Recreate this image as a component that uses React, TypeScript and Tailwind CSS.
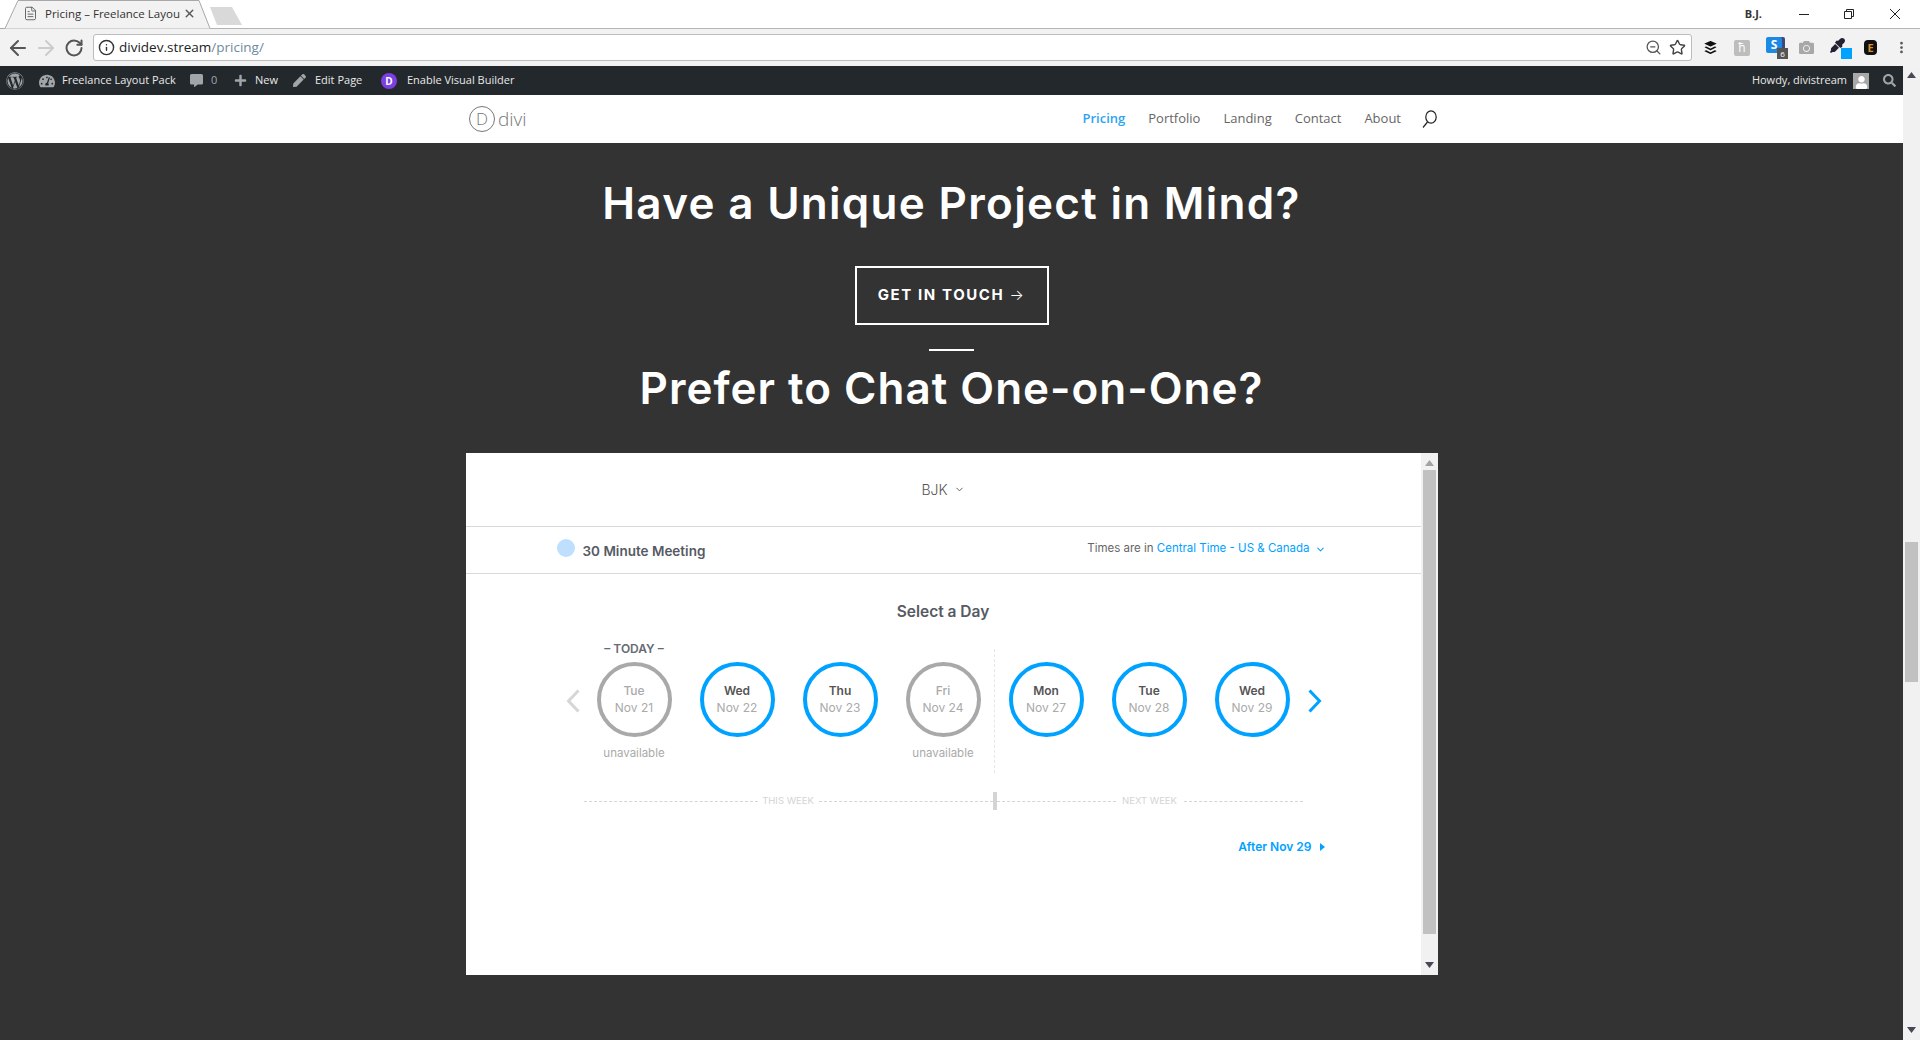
import { ArrowLeft, ArrowRight, ChevronDown, FileText, Info, MoreVertical, RotateCw, Star, X, ZoomOut } from 'lucide-react';
import { FaBuffer, FaCamera, FaCommentAlt, FaEyeDropper, FaPen, FaPlus, FaSearch, FaTachometerAlt, FaUser, FaWordpress } from 'react-icons/fa';

const openSans = 'font-["Open_Sans",sans-serif]';
const calFont = 'font-["Inter",sans-serif]';

const days = [
  { name: 'Tue', date: 'Nov 21', off: true, today: true },
  { name: 'Wed', date: 'Nov 22' },
  { name: 'Thu', date: 'Nov 23' },
  { name: 'Fri', date: 'Nov 24', off: true },
  { name: 'Mon', date: 'Nov 27' },
  { name: 'Tue', date: 'Nov 28' },
  { name: 'Wed', date: 'Nov 29' },
];

function ScrollArrow({ down, color = '#4a4658' }: { down?: boolean; color?: string }) {
  return (
    <svg width="9" height="6" viewBox="0 0 9 6" className="shrink-0">
      <path d={down ? 'M0 0h9L4.5 6z' : 'M0 6h9L4.5 0z'} fill={color} />
    </svg>
  );
}

function Chrome() {
  return (
    <>
      <div className="h-[29px] bg-white border-b border-[#b4b4b4] flex items-start justify-between relative">
        <div className="relative w-[211px] h-[29px] flex items-center pl-[23px] pb-[2px]">
          <svg className="absolute left-0 top-0" width="211" height="29" viewBox="0 0 211 29">
            <path d="M0 28.5h5L18 .5h181l11 28" fill="#f2f2f2" stroke="#a8a8a8" />
          </svg>
          <FileText className="relative text-[#555] w-[15px] h-[15px]" strokeWidth={1.4} />
          <span className={`relative ml-[7px] w-[133px] whitespace-nowrap text-[11.5px] text-[#333] ${openSans}`}>Pricing – Freelance Layou</span>
          <X className="relative ml-[5px] text-[#555] w-[13px] h-[13px]" strokeWidth={2.6} />
          <svg className="absolute left-[209px] top-[7px]" width="34" height="18" viewBox="0 0 34 18">
            <path d="M1 0h22l10 18H8z" fill="#d9d9d9" />
          </svg>
        </div>
        <div className="flex items-center h-[28px] pr-[20px]">
          <span className={`text-[11px] font-bold text-[#333] mr-[37px] ${openSans}`}>B.J.</span>
          <div className="w-[10px] h-px bg-[#222] mr-[35px]" />
          <svg className="mr-[36px]" width="10" height="10" viewBox="0 0 10 10" fill="none" stroke="#222">
            <path d="M.5 2.5h7v7h-7zM2.5 2.5v-2h7v7h-2" />
          </svg>
          <svg width="10" height="10" viewBox="0 0 10 10" stroke="#222">
            <path d="M0 0l10 10M10 0L0 10" />
          </svg>
        </div>
      </div>
      <div className="h-[37px] bg-[#f2f2f2] flex items-center pl-[6px]">
        <ArrowLeft className="w-[24px] h-[24px] text-[#555]" strokeWidth={2} />
        <ArrowRight className="ml-[4px] w-[24px] h-[24px] text-[#ccc]" strokeWidth={2} />
        <RotateCw className="ml-[6px] w-[20px] h-[20px] text-[#555]" strokeWidth={2.4} />
        <div className="ml-[9px] w-[1599px] h-[27px] bg-white border border-[#bcbcbc] rounded-[3px] flex items-center pl-[4px] pr-[5px]">
          <Info className="w-[17px] h-[17px] text-[#333]" strokeWidth={2} />
          <span className={`ml-[4px] text-[13.5px] text-[#222] ${openSans}`}>dividev.stream<span className="text-[#6e8aa0]">/pricing/</span></span>
          <ZoomOut className="ml-auto mr-[1px] w-[17px] h-[17px] text-[#555]" strokeWidth={1.8} />
          <Star className="ml-[6px] w-[17px] h-[17px] text-[#444]" strokeWidth={2} />
        </div>
        <FaBuffer className="ml-[11px] w-[15px] h-[15px] text-[#111]" />
        <div className={`ml-[16px] w-[16px] h-[16px] rounded-[2px] bg-[#bdbdbd] text-white text-[12px] leading-[16px] text-center ${openSans}`}>ħ</div>
        <div className="relative ml-[16px] w-[22px] h-[22px]">
          <div className="absolute left-[3px] top-0 w-[16px] h-[16px] rounded-[2px] bg-[#3b4a7a]" />
          <div className={`relative w-[16px] h-[16px] rounded-[2px] bg-[#1e88e5] text-white text-[12px] leading-[16px] font-bold text-center ${openSans}`}>S</div>
          <div className={`absolute right-0 bottom-0 w-[11px] h-[11px] bg-[#555] text-white text-[8px] leading-[11px] text-center ${openSans}`}>6</div>
        </div>
        <FaCamera className="ml-[11px] w-[15px] h-[15px] text-[#a8a8a8]" />
        <div className="relative ml-[16px] w-[22px] h-[22px]">
          <FaEyeDropper className="w-[15px] h-[15px] mt-[1px] text-[#223]" />
          <div className="absolute right-0 bottom-0 w-[11px] h-[11px] bg-[#00a2ff]" />
        </div>
        <div className={`ml-[12px] w-[13px] h-[15px] rounded-[4px] bg-[#111] text-[#d9902a] text-[11px] leading-[15px] font-bold text-center ${openSans}`}>E</div>
        <MoreVertical className="ml-[17px] w-[15px] h-[15px] text-[#555]" strokeWidth={2.4} />
      </div>
    </>
  );
}

function AdminBar() {
  return (
    <div className={`h-[29px] bg-[#23282d] flex items-center text-[#e8e8e8] text-[11px] ${openSans}`}>
      <FaWordpress className="ml-[6px] w-[18px] h-[18px] text-[#a0a5aa]" />
      <FaTachometerAlt className="ml-[15px] w-[16px] h-[16px] text-[#a0a5aa]" />
      <span className="ml-[7px] w-[128px] whitespace-nowrap">Freelance Layout Pack</span>
      <FaCommentAlt className="w-[13px] h-[13px] text-[#a0a5aa]" />
      <span className="ml-[8px] w-[7px] text-[#a0a5aa]">0</span>
      <FaPlus className="ml-[16px] w-[13px] h-[13px] text-[#a0a5aa]" />
      <span className="ml-[8px] w-[23px]">New</span>
      <FaPen className="ml-[15px] w-[13px] h-[13px] text-[#a0a5aa]" />
      <span className="ml-[9px] w-[48px] whitespace-nowrap">Edit Page</span>
      <div className="ml-[18px] w-[16px] h-[16px] rounded-full bg-[#7c3fe4] text-white text-[10px] leading-[16px] font-bold text-center">D</div>
      <span className="ml-[10px]">Enable Visual Builder</span>
      <span className="ml-auto">Howdy, divistream</span>
      <div className="ml-[6px] w-[16px] h-[16px] bg-[#a8a8a8] flex items-end justify-center overflow-hidden">
        <FaUser className="w-[13px] h-[13px] text-white" />
      </div>
      <FaSearch className="ml-[14px] mr-[7px] w-[13px] h-[13px] text-[#a0a5aa]" />
    </div>
  );
}

function Nav() {
  const links = ['Portfolio', 'Landing', 'Contact', 'About'];
  return (
    <div className={`h-[48px] bg-white flex items-center justify-between pl-[469px] pr-[466px] ${openSans}`}>
      <div className="flex items-center">
        <div className="w-[26px] h-[26px] rounded-full border border-[#777] text-[#777] text-[17px] leading-[24px] font-light text-center">D</div>
        <span className="ml-[3px] text-[19px] font-light leading-none text-[#777]">divi</span>
      </div>
      <div className="flex items-center text-[13px] text-[#666]">
        <span className="text-[#2ea3f2] font-semibold">Pricing</span>
        {links.map((l) => (
          <span key={l} className="ml-[23px]">{l}</span>
        ))}
        <svg className="ml-[20px]" width="16" height="18" viewBox="0 0 16 18" fill="none" stroke="#222" strokeWidth="1.2">
          <ellipse cx="10" cy="7" rx="5.2" ry="6.2" />
          <path d="M6.5 12L2 17.5" />
        </svg>
      </div>
    </div>
  );
}

function Day({ name, date, off, today }: { name: string; date: string; off?: boolean; today?: boolean }) {
  return (
    <div className="w-[75px] flex flex-col items-center shrink-0">
      <div className="h-[20px] text-[12px] leading-[14px] font-semibold text-[#666a73] whitespace-nowrap">{today ? '– TODAY –' : ''}</div>
      <div className={`w-[75px] h-[75px] rounded-full border-[4px] flex flex-col items-center ${off ? 'border-[#a9a9a9]' : 'border-[#00a2ff]'}`}>
        <span className={`mt-[17px] text-[12px] leading-[16px] ${off ? 'text-[#aaa] font-medium' : 'text-[#555] font-semibold'}`}>{name}</span>
        <span className="mt-[1px] text-[12px] leading-[16px] text-[#aaa]">{date}</span>
      </div>
      {off && <div className="mt-[9px] text-[11.5px] leading-[14px] text-[#aaa]">unavailable</div>}
    </div>
  );
}

function Calendar() {
  return (
    <div className={`mt-[40px] mx-auto w-[972px] h-[522px] bg-white flex ${calFont}`}>
      <div className="w-[955px] flex flex-col">
        <div className="h-[74px] border-b border-[#d9d9d9] flex items-center justify-center text-[14px] font-light text-[#555]">
          BJK
          <ChevronDown className="ml-[6px] w-[11px] h-[11px]" strokeWidth={2} />
        </div>
        <div className="h-[47px] border-b border-[#d9d9d9] flex justify-between pl-[91px] pr-[95px]">
          <div className="flex items-start">
            <div className="mt-[12px] w-[18px] h-[18px] rounded-full bg-[#bfdfff]" />
            <span className="ml-[8px] mt-[14px] text-[13.5px] leading-[20px] font-semibold text-[#555a63]">30 Minute Meeting</span>
          </div>
          <div className="flex items-center h-[44px] text-[11.5px] text-[#666] whitespace-nowrap">
            Times are in&nbsp;<span className="text-[#00a2ff]">Central Time - US &amp; Canada</span>
            <ChevronDown className="ml-[5px] w-[11px] h-[11px] text-[#00a2ff]" strokeWidth={2.2} />
          </div>
        </div>
        <div className="mt-[28px] text-center text-[15.5px] leading-[20px] font-semibold text-[#555a63]">Select a Day</div>
        <div className="mt-[20px] ml-[100px] flex items-start">
          <svg className="mt-[47px] shrink-0" width="14" height="24" viewBox="0 0 14 24" fill="none" stroke="#d6d6d6" strokeWidth="3">
            <path d="M12.5 1.5L2.5 12l10 10.5" />
          </svg>
          <div className="ml-[17px] flex gap-[28px]">
            {days.slice(0, 4).map((d) => (
              <Day key={d.date} {...d} />
            ))}
          </div>
          <div className="mt-[7px] ml-[13px] mr-[14px] h-[124px] border-l border-dashed border-[#e6e6e6]" />
          <div className="flex gap-[28px]">
            {days.slice(4).map((d) => (
              <Day key={d.date} {...d} />
            ))}
          </div>
          <svg className="mt-[47px] ml-[18px] shrink-0" width="14" height="24" viewBox="0 0 14 24" fill="none" stroke="#00a2ff" strokeWidth="3">
            <path d="M1.5 1.5L11.5 12 1.5 22.5" />
          </svg>
        </div>
        <div className="mt-[19px] ml-[118px] w-[719px] h-[18px] flex items-center text-[9.5px] text-[#d4d4d4]">
          <div className="w-[174px] border-t border-dashed border-[#d4d4d4]" />
          <div className="w-[61px] text-center whitespace-nowrap">THIS WEEK</div>
          <div className="w-[174px] border-t border-dashed border-[#d4d4d4]" />
          <div className="w-[4px] h-[18px] bg-[#d4d4d4]" />
          <div className="w-[119px] border-t border-dashed border-[#d4d4d4]" />
          <div className="w-[68px] text-center whitespace-nowrap">NEXT WEEK</div>
          <div className="w-[119px] border-t border-dashed border-[#d4d4d4]" />
        </div>
        <div className="mt-[29px] pr-[96px] flex items-center justify-end text-[12px] leading-[16px] font-semibold text-[#00a2ff]">
          After Nov 29
          <svg className="ml-[8px]" width="5" height="8" viewBox="0 0 5 8">
            <path d="M0 0l5 4-5 4z" fill="#00a2ff" />
          </svg>
        </div>
      </div>
      <div className="w-[17px] bg-[#f1f1f1] flex flex-col items-center pt-[7px] pb-[7px]">
        <ScrollArrow color="#a3a3a3" />
        <div className="mt-[4px] w-[13px] h-[464px] bg-[#c1c1c1]" />
        <div className="mt-auto"><ScrollArrow down /></div>
      </div>
    </div>
  );
}

export default function App() {
  return (
    <div className="w-[1920px] h-[1040px] overflow-hidden flex flex-col">
      <Chrome />
      <div className="flex flex-1 min-h-0">
        <div className="w-[1903px] flex flex-col">
          <AdminBar />
          <Nav />
          <div className="flex-1 bg-[#333] flex flex-col items-center pt-[35px] font-['Inter',sans-serif] text-white">
            <h1 className="text-[44px] leading-[50px] font-semibold tracking-[1.3px]">Have a Unique Project in Mind?</h1>
            <div className="mt-[38px] w-[194px] h-[59px] border-2 border-white flex items-center justify-center pb-[1px] text-[15px] font-bold tracking-[1.6px]">
              GET IN TOUCH <span className="ml-[5px] font-light">→</span>
            </div>
            <div className="mt-[24px] w-[45px] h-[2px] bg-white" />
            <h2 className="mt-[12px] text-[44px] leading-[50px] font-semibold tracking-[1px]">Prefer to Chat One-on-One?</h2>
            <Calendar />
          </div>
        </div>
        <div className="w-[17px] bg-[#f1f1f1] flex flex-col items-center pt-[6px] pb-[7px]">
          <ScrollArrow />
          <div className="mt-[464px] w-[13px] h-[140px] bg-[#c1c1c1]" />
          <div className="mt-auto"><ScrollArrow down /></div>
        </div>
      </div>
    </div>
  );
}
